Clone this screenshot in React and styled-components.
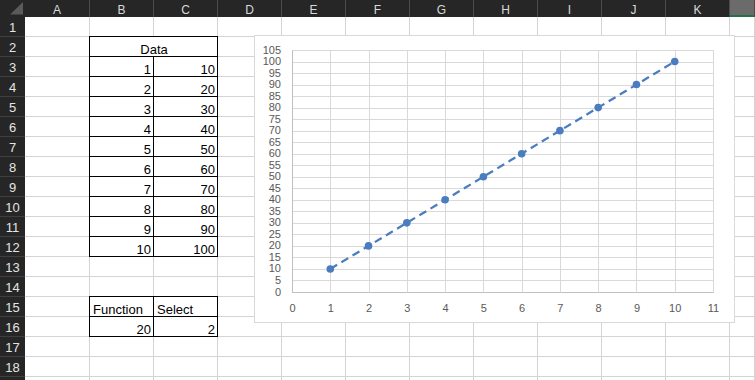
import React from 'react';
import styled, { createGlobalStyle } from 'styled-components';

const Global = createGlobalStyle`
  html, body { margin: 0; padding: 0; background: #fff; overflow: hidden; }
  #root { width: 755px; height: 380px; }
`;

const Sheet = styled.div`
  position: relative;
  width: 755px;
  height: 380px;
  overflow: hidden;
  display: grid;
  grid-template-columns: 25px 65px repeat(10, 64px) 25px;
  grid-template-rows: 17px repeat(19, 20px);
  font-family: "Liberation Sans", Arial, sans-serif;
  background: #fff;
`;

const Corner = styled.div`
  background: #262626;
  display: flex;
`;

const ColHead = styled.div`
  box-sizing: border-box;
  background: ${(p) => (p.$active ? '#6b6b6b' : '#262626')};
  border-right: 1px solid #4a4a4a;
  border-bottom: ${(p) => (p.$active ? '2px solid #217346' : 'none')};
  color: #d9d9d9;
  font-size: 12px;
  line-height: 12px;
  display: flex;
  align-items: center;
  justify-content: center;
  padding-top: 2px;
`;

const RowHead = styled.div`
  box-sizing: border-box;
  background: #262626;
  border-bottom: 1px solid #3f3f3f;
  color: #e4e4e4;
  font-size: 13px;
  line-height: 13px;
  display: flex;
  align-items: center;
  justify-content: center;
  padding-top: 2px;
`;

const Cell = styled.div`
  box-sizing: border-box;
  grid-column: ${(p) => (p.$span ? `span ${p.$span}` : 'auto')};
  border-right: 1px solid ${(p) => (p.$boxed ? '#000' : '#d4d4d4')};
  border-bottom: 1px solid ${(p) => (p.$boxed ? '#000' : '#d4d4d4')};
  box-shadow: ${(p) =>
    p.$boxed ? '-1px 0 0 #000, 0 -1px 0 #000, -1px -1px 0 #000' : 'none'};
  color: #000;
  font-size: 13px;
  line-height: 13px;
  white-space: nowrap;
  display: flex;
  align-items: flex-end;
  justify-content: ${(p) =>
    p.$align === 'right' ? 'flex-end' : p.$align === 'center' ? 'center' : 'flex-start'};
  padding: 0 2px 0 3px;
`;

const ChartBox = styled.div`
  position: absolute;
  left: 254px;
  top: 35px;
  width: 481px;
  height: 288px;
  box-sizing: border-box;
  border: 1px solid #d9d9d9;
  background: #fff;
  display: flex;
`;

const COLS = ['A', 'B', 'C', 'D', 'E', 'F', 'G', 'H', 'I', 'J', 'K'];

function buildRows() {
  const rows = [];
  for (let r = 1; r <= 19; r++) {
    const cells = [];
    if (r === 2) {
      cells.push({ t: '' });
      cells.push({ t: 'Data', span: 2, align: 'center', boxed: true });
      for (let i = 0; i < 9; i++) cells.push({ t: '' });
    } else if (r >= 3 && r <= 12) {
      const n = r - 2;
      cells.push({ t: '' });
      cells.push({ t: String(n), align: 'right', boxed: true });
      cells.push({ t: String(n * 10), align: 'right', boxed: true });
      for (let i = 0; i < 9; i++) cells.push({ t: '' });
    } else if (r === 15) {
      cells.push({ t: '' });
      cells.push({ t: 'Function', align: 'left', boxed: true });
      cells.push({ t: 'Select', align: 'left', boxed: true });
      for (let i = 0; i < 9; i++) cells.push({ t: '' });
    } else if (r === 16) {
      cells.push({ t: '' });
      cells.push({ t: '20', align: 'right', boxed: true });
      cells.push({ t: '2', align: 'right', boxed: true });
      for (let i = 0; i < 9; i++) cells.push({ t: '' });
    } else {
      for (let i = 0; i < 12; i++) cells.push({ t: '' });
    }
    rows.push(cells);
  }
  return rows;
}

const PL = 37;
const PR = 458;
const PT = 14;
const PB = 256;
const X = (i) => PL + (i * (PR - PL)) / 11;
const Y = (v) => PB - (v * (PB - PT)) / 105;
const crisp = (v) => Math.round(v) + 0.5;

function Chart() {
  const xs = Array.from({ length: 12 }, (_, i) => i);
  const ys = Array.from({ length: 22 }, (_, i) => i * 5);
  const pts = Array.from({ length: 10 }, (_, i) => [X(i + 1), Y((i + 1) * 10)]);
  const blue = '#4a7dbf';
  return (
    <ChartBox>
      <svg width="479" height="286" viewBox="0 0 479 286">
        {ys.map((v) => (
          <line
            key={'h' + v}
            x1={PL}
            x2={crisp(PR) + 0.5}
            y1={crisp(Y(v))}
            y2={crisp(Y(v))}
            stroke={v === 0 ? '#bfbfbf' : '#d9d9d9'}
            strokeWidth="1"
          />
        ))}
        {xs.map((i) => (
          <line
            key={'v' + i}
            x1={crisp(X(i))}
            x2={crisp(X(i))}
            y1={crisp(PT)}
            y2={crisp(PB)}
            stroke={i === 0 ? '#bfbfbf' : '#d9d9d9'}
            strokeWidth="1"
          />
        ))}
        {ys.map((v) => (
          <text
            key={'yl' + v}
            x="26"
            y={Y(v) + 3.5}
            textAnchor="end"
            fontFamily="Liberation Sans, Arial, sans-serif"
            fontSize="11"
            fill="#595959"
          >
            {v}
          </text>
        ))}
        {xs.map((i) => (
          <text
            key={'xl' + i}
            x={X(i) + 0.5}
            y="276"
            textAnchor="middle"
            fontFamily="Liberation Sans, Arial, sans-serif"
            fontSize="11"
            fill="#595959"
          >
            {i}
          </text>
        ))}
        <polyline
          points={pts.map((p) => p.join(',')).join(' ')}
          fill="none"
          stroke={blue}
          strokeWidth="2.25"
          strokeDasharray="8 5"
        />
        {pts.map((p, i) => (
          <circle key={'p' + i} cx={p[0]} cy={p[1]} r="3.8" fill={blue} />
        ))}
      </svg>
    </ChartBox>
  );
}

export default function App() {
  const rows = buildRows();
  return (
    <>
      <Global />
      <Sheet>
        <Corner>
          <svg width="25" height="17" viewBox="0 0 25 17">
            <polygon points="10,14.5 23,14.5 23,2" fill="#5a5a5a" />
          </svg>
        </Corner>
        {COLS.map((c) => (
          <ColHead key={c}>{c}</ColHead>
        ))}
        <ColHead $active />
        {rows.map((cells, ri) => (
          <React.Fragment key={ri}>
            <RowHead>{ri < 18 ? ri + 1 : ''}</RowHead>
            {cells.map((c, ci) => (
              <Cell key={ci} $span={c.span} $align={c.align} $boxed={c.boxed}>
                {c.t}
              </Cell>
            ))}
          </React.Fragment>
        ))}
        <Chart />
      </Sheet>
    </>
  );
}
